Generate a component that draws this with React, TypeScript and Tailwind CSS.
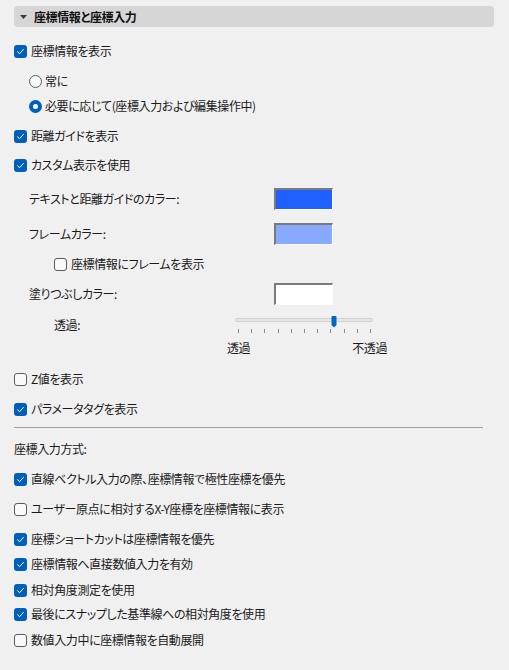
import React from "react";

const font = "font-['Noto_Sans_CJK_JP','Noto_Sans',sans-serif] [font-feature-settings:'palt'] tracking-[-0.4px]";

function Check({ checked }: { checked: boolean }) {
  if (checked) {
    return (
      <span className="flex h-[13px] w-[13px] shrink-0 items-center justify-center rounded-[3px] bg-[#005fb8]">
        <svg width="9" height="9" viewBox="0 0 9 9">
          <path d="M1.6 4.8 L3.6 6.7 L7.4 2.4" fill="none" stroke="#ffffff" strokeWidth="1" strokeLinecap="round" strokeLinejoin="round" />
        </svg>
      </span>
    );
  }
  return <span className="h-[13px] w-[13px] shrink-0 rounded-[3px] border border-[#5c5c5c] bg-[#f9f9f9]" />;
}

function Radio({ checked }: { checked: boolean }) {
  if (checked) {
    return (
      <span className="flex h-[13px] w-[13px] shrink-0 items-center justify-center rounded-full bg-[#005fb8]">
        <span className="h-[5px] w-[5px] rounded-full bg-white" />
      </span>
    );
  }
  return <span className="h-[13px] w-[13px] shrink-0 rounded-full border border-[#5c5c5c] bg-[#f9f9f9]" />;
}

function CheckRow({ checked, label, mt, indent = "pl-[14px]" }: { checked: boolean; label: string; mt: string; indent?: string }) {
  return (
    <div className={`flex h-[20px] items-center gap-[4px] ${indent} ${mt}`}>
      <Check checked={checked} />
      <span>{label}</span>
    </div>
  );
}

function Swatch({ color }: { color: string }) {
  return (
    <div
      className="h-[22px] w-[59px] border-l-2 border-t-2 border-b border-r border-l-[#7a7a7a] border-t-[#7a7a7a] border-b-white border-r-white"
      style={{ backgroundColor: color }}
    />
  );
}

function ColorRow({ label, color, mt }: { label: string; color: string; mt: string }) {
  return (
    <div className={`flex h-[22px] items-center ${mt}`}>
      <span className="w-[274px] pl-[29px]">{label}</span>
      <Swatch color={color} />
    </div>
  );
}

export default function App() {
  const ticks = Array.from({ length: 11 }, (_, i) => i);
  return (
    <div className={`h-[670px] w-[509px] overflow-hidden bg-[#f0f0f0] text-[12px] leading-none text-[#1a1a1a] ${font}`}>
      <div className="pt-[6px]">
        <div className="mx-[14px] flex h-[21px] w-[480px] items-center rounded-[4px] bg-[#d6d6d6]">
          <svg className="ml-[6px] shrink-0" width="7" height="4" viewBox="0 0 7 4">
            <path d="M0 0 L7 0 L3.5 4 Z" fill="#3a3a3a" />
          </svg>
          <span className="ml-[7px] font-bold text-[#111]">座標情報と座標入力</span>
        </div>
      </div>

      <CheckRow checked label="座標情報を表示" mt="mt-[14px]" />

      <div className="mt-[10px] flex h-[20px] items-center gap-[3px] pl-[29px]">
        <Radio checked={false} />
        <span>常に</span>
      </div>
      <div className="mt-[5px] flex h-[20px] items-center gap-[3px] pl-[29px]">
        <Radio checked />
        <span>必要に応じて(座標入力および編集操作中)</span>
      </div>

      <CheckRow checked label="距離ガイドを表示" mt="mt-[10px]" />
      <CheckRow checked label="カスタム表示を使用" mt="mt-[9px]" />

      <ColorRow label="テキストと距離ガイドのカラー:" color="#2060ff" mt="mt-[13px]" />
      <ColorRow label="フレームカラー:" color="#87a9ff" mt="mt-[13px]" />

      <CheckRow checked={false} label="座標情報にフレームを表示" mt="mt-[9px]" indent="pl-[54px]" />

      <ColorRow label="塗りつぶしカラー:" color="#ffffff" mt="mt-[9px]" />

      <div className="mt-[10px] flex h-[20px] items-center">
        <span className="w-[235px] pl-[54px]">透過:</span>
        <div className="relative h-[20px] w-[138px]">
          <div className="absolute left-0 right-0 top-[3px] h-[4px] rounded-[2px] border border-[#d0d0d0] bg-[#e6e6e6]" />
          <svg className="absolute left-[96px] top-[1px]" width="6" height="12" viewBox="0 0 6 12">
            <path d="M0.5 1 Q0.5 0 1.5 0 L4.5 0 Q5.5 0 5.5 1 L5.5 9 L3 11.5 L0.5 9 Z" fill="#0067c0" />
          </svg>
          {ticks.map((i) => (
            <span
              key={i}
              className="absolute top-[14px] h-[4px] w-px bg-[#8a8a8a]"
              style={{ left: `${3 + i * 13.2}px` }}
            />
          ))}
        </div>
      </div>
      <div className="mt-[5px] flex h-[16px] items-center">
        <span className="ml-[227px]">透過</span>
        <span className="ml-[102px]">不透過</span>
      </div>

      <CheckRow checked={false} label="Z値を表示" mt="mt-[13px]" />
      <CheckRow checked label="パラメータタグを表示" mt="mt-[10px]" />

      <div className="ml-[14px] mt-[8px] h-px w-[469px] bg-[#a0a0a0]" />

      <div className="mt-[11px] flex h-[20px] items-center pl-[14px]">
        <span>座標入力方式:</span>
      </div>

      <CheckRow checked label="直線ベクトル入力の際、座標情報で極性座標を優先" mt="mt-[10px]" />
      <CheckRow checked={false} label="ユーザー原点に相対するX-Y座標を座標情報に表示" mt="mt-[10px]" />
      <CheckRow checked label="座標ショートカットは座標情報を優先" mt="mt-[10px]" />
      <CheckRow checked label="座標情報へ直接数値入力を有効" mt="mt-[5px]" />
      <CheckRow checked label="相対角度測定を使用" mt="mt-[6px]" />
      <CheckRow checked label="最後にスナップした基準線への相対角度を使用" mt="mt-[4px]" />
      <CheckRow checked={false} label="数値入力中に座標情報を自動展開" mt="mt-[6px]" />
    </div>
  );
}
